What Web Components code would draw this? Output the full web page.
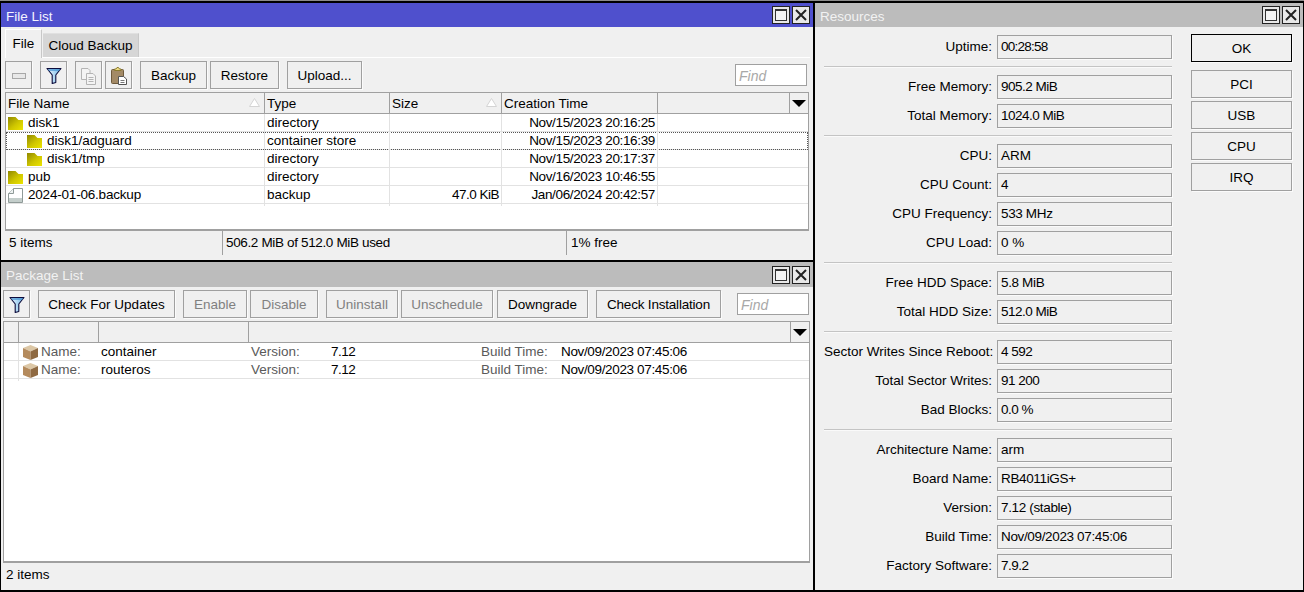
<!DOCTYPE html>
<html><head><meta charset="utf-8"><title>RouterOS</title>
<style>
html,body{margin:0;padding:0;height:100%;background:#000;overflow:hidden}
body{font:13.5px/18px "Liberation Sans",Arial,sans-serif;color:#000}
.n{letter-spacing:-.5px}
.d{letter-spacing:-.35px}
.f{letter-spacing:-.2px}
</style></head><body>
<mt-desktop>
  <mt-stack>
    <mt-window heading="File List" active style="--title-h:24px;--pad-l:4px;--pad-r:4px;--pad-b:5px;height:257px">
      <mt-tabs><mt-tab selected style="width:37px">File</mt-tab><mt-tab style="width:96px">Cloud Backup</mt-tab></mt-tabs>
      <mt-toolbar style="height:28px;margin-top:3px">
        <mt-button style="width:27px"><mt-icon name="minus"></mt-icon></mt-button>
        <mt-button style="width:27px;margin-left:8px"><mt-icon name="filter"></mt-icon></mt-button>
        <mt-button style="width:27px;margin-left:8px"><mt-icon name="copy"></mt-icon></mt-button>
        <mt-button style="width:27px;margin-left:3px"><mt-icon name="paste"></mt-icon></mt-button>
        <mt-button style="width:67px;margin-left:8px">Backup</mt-button>
        <mt-button style="width:69px;margin-left:3px">Restore</mt-button>
        <mt-button style="width:75px;margin-left:8px">Upload...</mt-button>
        <mt-find style="margin-left:auto;margin-right:2px"></mt-find>
      </mt-toolbar>
      <mt-table style="--cols:259px 125px 112px 156px 132px 18px;margin-top:3px">
        <mt-row header>
          <mt-cell sep sort>File Name</mt-cell><mt-cell sep>Type</mt-cell><mt-cell sep sort>Size</mt-cell><mt-cell sep>Creation Time</mt-cell><mt-cell sep></mt-cell><mt-cell menu></mt-cell>
        </mt-row>
        <mt-row><mt-cell sep><mt-icon name="folder"></mt-icon><span style="margin-left:5px">disk1</span></mt-cell><mt-cell sep>directory</mt-cell><mt-cell sep></mt-cell><mt-cell sep right><span class="d">Nov/15/2023 20:16:25</span></mt-cell><mt-cell></mt-cell><mt-cell></mt-cell></mt-row>
        <mt-row focused><mt-cell sep style="padding-left:21px"><mt-icon name="folder"></mt-icon><span style="margin-left:5px">disk1/adguard</span></mt-cell><mt-cell sep>container store</mt-cell><mt-cell sep></mt-cell><mt-cell sep right><span class="d">Nov/15/2023 20:16:39</span></mt-cell><mt-cell></mt-cell><mt-cell></mt-cell></mt-row>
        <mt-row><mt-cell sep style="padding-left:21px"><mt-icon name="folder"></mt-icon><span style="margin-left:5px">disk1/tmp</span></mt-cell><mt-cell sep>directory</mt-cell><mt-cell sep></mt-cell><mt-cell sep right><span class="d">Nov/15/2023 20:17:37</span></mt-cell><mt-cell></mt-cell><mt-cell></mt-cell></mt-row>
        <mt-row><mt-cell sep><mt-icon name="folder"></mt-icon><span style="margin-left:5px">pub</span></mt-cell><mt-cell sep>directory</mt-cell><mt-cell sep></mt-cell><mt-cell sep right><span class="d">Nov/16/2023 10:46:55</span></mt-cell><mt-cell></mt-cell><mt-cell></mt-cell></mt-row>
        <mt-row><mt-cell sep><mt-icon name="file"></mt-icon><span class="f" style="margin-left:5px">2024-01-06.backup</span></mt-cell><mt-cell sep>backup</mt-cell><mt-cell sep right><span class="n">47.0 KiB</span></mt-cell><mt-cell sep right><span class="d">Jan/06/2024 20:42:57</span></mt-cell><mt-cell></mt-cell><mt-cell></mt-cell></mt-row>
      </mt-table>
      <mt-status style="--status-cols:218px 344px 1fr"><span>5 items</span><span class="d" style="padding-left:3px">506.2 MiB of 512.0 MiB used</span><span>1% free</span></mt-status>
    </mt-window>
    <mt-window heading="Package List" style="--title-h:25px;--pad-l:2px;--pad-r:3px;--pad-b:3px;flex:1">
      <mt-toolbar style="height:28px;margin-top:3px">
        <mt-button style="width:27px"><mt-icon name="filter"></mt-icon></mt-button>
        <mt-button style="width:137px;margin-left:8px">Check For Updates</mt-button>
        <mt-button disabled style="width:64px;margin-left:8px">Enable</mt-button>
        <mt-button disabled style="width:68px;margin-left:3px">Disable</mt-button>
        <mt-button disabled style="width:72px;margin-left:8px">Uninstall</mt-button>
        <mt-button disabled style="width:92px;margin-left:3px">Unschedule</mt-button>
        <mt-button style="width:91px;margin-left:4px">Downgrade</mt-button>
        <mt-button class="f" style="width:125px;margin-left:8px">Check Installation</mt-button>
        <mt-find style="margin-left:auto;margin-right:1px"></mt-find>
      </mt-toolbar>
      <mt-table style="flex:1;--cols:15px 80px 150px 542px 18px;margin-top:3px">
        <mt-row header><mt-cell sep></mt-cell><mt-cell sep></mt-cell><mt-cell sep></mt-cell><mt-cell sep></mt-cell><mt-cell menu></mt-cell></mt-row>
        <mt-row style="--cols:15px 80px 150px 80px 150px 80px 1fr"><mt-cell sepl></mt-cell><mt-cell dim style="padding-left:4px"><mt-icon name="box"></mt-icon><span style="margin-left:3px">Name:</span></mt-cell><mt-cell>container</mt-cell><mt-cell dim>Version:</mt-cell><mt-cell><span class="n">7.12</span></mt-cell><mt-cell dim>Build Time:</mt-cell><mt-cell><span class="d">Nov/09/2023 07:45:06</span></mt-cell></mt-row>
        <mt-row style="--cols:15px 80px 150px 80px 150px 80px 1fr"><mt-cell sepl></mt-cell><mt-cell dim style="padding-left:4px"><mt-icon name="box"></mt-icon><span style="margin-left:3px">Name:</span></mt-cell><mt-cell>routeros</mt-cell><mt-cell dim>Version:</mt-cell><mt-cell><span class="n">7.12</span></mt-cell><mt-cell dim>Build Time:</mt-cell><mt-cell><span class="d">Nov/09/2023 07:45:06</span></mt-cell></mt-row>
      </mt-table>
      <mt-status style="--status-cols:1fr;--status-pl:3px"><span>2 items</span></mt-status>
    </mt-window>
  </mt-stack>
  <mt-window heading="Resources" style="--title-h:24px;height:587px">
    <mt-dialog>
      <mt-form>
        <mt-field label="Uptime:"><span style="letter-spacing:-.75px">00:28:58</span></mt-field>
        <mt-sep></mt-sep>
        <mt-field label="Free Memory:"><span class="n">905.2 MiB</span></mt-field>
        <mt-field label="Total Memory:"><span class="n">1024.0 MiB</span></mt-field>
        <mt-sep></mt-sep>
        <mt-field label="CPU:">ARM</mt-field>
        <mt-field label="CPU Count:">4</mt-field>
        <mt-field label="CPU Frequency:"><span class="d">533 MHz</span></mt-field>
        <mt-field label="CPU Load:">0 %</mt-field>
        <mt-sep></mt-sep>
        <mt-field label="Free HDD Space:"><span class="d">5.8 MiB</span></mt-field>
        <mt-field label="Total HDD Size:"><span class="n">512.0 MiB</span></mt-field>
        <mt-sep></mt-sep>
        <mt-field label="Sector Writes Since Reboot:"><span class="n">4 592</span></mt-field>
        <mt-field label="Total Sector Writes:"><span class="n">91 200</span></mt-field>
        <mt-field label="Bad Blocks:"><span class="n">0.0 %</span></mt-field>
        <mt-sep></mt-sep>
        <mt-field label="Architecture Name:">arm</mt-field>
        <mt-field label="Board Name:"><span class="d">RB4011iGS+</span></mt-field>
        <mt-field label="Version:"><span class="d">7.12 (stable)</span></mt-field>
        <mt-field label="Build Time:"><span class="d">Nov/09/2023 07:45:06</span></mt-field>
        <mt-field label="Factory Software:"><span class="n">7.9.2</span></mt-field>
      </mt-form>
      <mt-actions>
        <mt-button primary style="height:28px;margin-bottom:8px">OK</mt-button>
        <mt-button style="height:28px;margin-bottom:3px">PCI</mt-button>
        <mt-button style="height:28px;margin-bottom:3px">USB</mt-button>
        <mt-button style="height:28px;margin-bottom:3px">CPU</mt-button>
        <mt-button style="height:28px">IRQ</mt-button>
      </mt-actions>
    </mt-dialog>
  </mt-window>
</mt-desktop>
<script>
function def(name,css,html){
  customElements.define(name,class extends HTMLElement{
    constructor(){super();this.attachShadow({mode:'open'});this._h=html;this._c=css;}
    connectedCallback(){ if(this._done) return; this._done=1; const h=this._h; this.shadowRoot.innerHTML='<style>'+this._c+'</style>'+(typeof h==='function'?h(this):h); }
  });
}
def('mt-desktop',`:host{display:grid;grid-template-columns:812px 488px;column-gap:2px;padding:2px 1px 2px 1px;border-top:1px solid #8c8c8c;box-sizing:border-box;height:592px;background:#000;align-items:start}`,'<slot></slot>');
def('mt-stack',`:host{display:flex;flex-direction:column;gap:2px;height:587px}`,'<slot></slot>');
def('mt-window',`:host{display:flex;flex-direction:column;background:#f0f0f0;min-height:0;--title:#bcbcbc;--title-fg:#f2f2f2}
:host([active]){--title:#4f50cd;--title-fg:#f4f4ff}
.t{flex:none;height:var(--title-h,24px);background:var(--title);color:var(--title-fg);display:flex;align-items:center;padding:0 3px 0 5px}
.t span{flex:1;padding-top:3px}
.b{width:18px;height:18px;box-sizing:border-box;border:1px solid #222;background:#e8e8e8;margin-left:2px;display:flex;align-items:center;justify-content:center}
.b i{display:block;width:12px;height:12px;box-sizing:border-box;border:1px solid #333;border-top-width:2px;background:#f4f4f4}
.c{flex:1;display:flex;flex-direction:column;min-height:0;padding:0 var(--pad-r,0) var(--pad-b,0) var(--pad-l,0)}`,
 h=>`<div class="t"><span>${h.getAttribute('heading')}</span><div class="b"><i></i></div><div class="b"><svg width="14" height="14" viewBox="0 0 14 14"><path d="M2 2 12 12M12 2 2 12" stroke="#222" stroke-width="2" fill="none"/></svg></div></div><div class="c"><slot></slot></div>`);
def('mt-tabs',`:host{display:flex;align-items:flex-end;height:30px;border-bottom:1px solid #fff;margin-right:-1px}`,'<slot></slot>');
def('mt-tab',`:host{display:block;box-sizing:border-box;height:24px;background:#d6d6d6;text-align:center;line-height:23px;margin-left:1px;border-right:1px solid #c8c8c8;border-top:1px solid #e0e0e0}
:host([selected]){height:29px;background:#f0f0f0;margin-left:0;border:0;border-left:1px solid #fff;border-top:1px solid #fff;line-height:28px;margin-bottom:-1px;border-right:1px solid #c8c8c8}`,'<slot></slot>');
def('mt-toolbar',`:host{display:flex;align-items:center;flex:none}`,'<slot></slot>');
def('mt-button',`:host{display:flex;align-items:center;justify-content:center;box-sizing:border-box;height:28px;flex:none;border:1px solid #a0a0a0;box-shadow:1px 1px 0 #fbfbfb;background:#f0f0f0;padding-top:2px}
:host([disabled]){color:#808080}
:host([primary]){border-color:#000}`,'<slot></slot>');
def('mt-find',`:host{display:block;box-sizing:border-box;width:72px;height:22px;border:1px solid #a0a0a0;background:#fff;color:#a8a8a8;font-style:italic;font-size:14px;line-height:22px;padding-left:3px}`,'Find');
def('mt-table',`:host{display:block;flex:1;min-height:0;background:#fff;border:1px solid #a0a0a0;border-bottom-width:2px;box-sizing:border-box}`,'<slot></slot>');
def('mt-row',`:host{display:grid;grid-template-columns:var(--cols);height:18px;box-sizing:border-box;border-bottom:1px solid #e2e2e2;background:#fff;position:relative;--cpb:2px;--cpt:0px}
:host([header]){height:21px;background:#f0f0f0;border-bottom:1px solid #a0a0a0;--sep:#a0a0a0;--cpb:0px;--cpt:2px}
:host([focused]){outline:1px dotted #555;outline-offset:-1px}`,'<slot></slot>');
def('mt-cell',`:host{display:flex;align-items:center;box-sizing:border-box;padding:var(--cpt,0) 2px var(--cpb,0) 2px;min-width:0;white-space:nowrap;position:relative;height:100%}
:host([sep]){border-right:1px solid var(--sep,#e2e2e2)}
:host([sepl]){border-right:1px solid #e2e2e2}
:host([right]){justify-content:flex-end}
:host([dim]){color:#5a5a5a}
.s{display:none;position:absolute;right:4px;top:5px}
:host([sort]) .s{display:block}
.m{display:none;position:absolute;left:2px;top:7px}
:host([menu]) .m{display:block}`,
 `<slot></slot><svg class="s" width="11" height="9" viewBox="0 0 11 9"><path d="M5.500 .5 10.500 8.500H.5Z" fill="#fff" stroke="#d4d4d4"/></svg><svg class="m" width="14" height="7" viewBox="0 0 14 7"><path d="M0 0H14L7 7Z" fill="#000"/></svg>`);
def('mt-status',`:host{display:grid;grid-template-columns:var(--status-cols);height:24px;flex:none;line-height:23px;margin-right:-1px;position:relative}
::slotted(span){padding-left:var(--status-pl,4px);border-right:1px solid #a0a0a0;box-sizing:border-box;white-space:nowrap}
::slotted(span:last-child){border-right:0}`,'<slot></slot>');
def('mt-dialog',`:host{display:flex;padding:8px 11px 0 9px}`,'<slot></slot>');
def('mt-form',`:host{display:flex;flex-direction:column;width:348px}`,'<slot></slot>');
def('mt-actions',`:host{display:flex;flex-direction:column;width:101px;margin-left:19px;margin-top:-1px}`,'<slot></slot>');
def('mt-field',`:host{display:grid;grid-template-columns:168px 175px;column-gap:5px;height:22px;margin-bottom:7px;line-height:24px}
.l{text-align:right;white-space:nowrap}
.v{box-sizing:border-box;border:1px solid #a0a0a0;padding-left:3px;line-height:22px;box-shadow:1px 1px 0 #fbfbfb}`,
 h=>`<div class="l">${h.getAttribute('label')}</div><div class="v"><slot></slot></div>`);
def('mt-sep',`:host{display:block;height:1px;background:#c4c4c4;box-shadow:0 1px 0 #fafafa;margin:2px 0 8px}`,'');
const ICONS={
 minus:`<svg width="14" height="6" viewBox="0 0 14 6"><rect x=".5" y=".5" width="13" height="5" fill="#e8e8e8" stroke="#a8a8a8"/></svg>`,
 filter:`<svg width="16" height="18" viewBox="0 0 16 18"><defs><linearGradient id="g" x1="0" x2="1"><stop offset="0" stop-color="#f2f9ff"/><stop offset="1" stop-color="#6fb6e6"/></linearGradient></defs><path d="M1 1.500H15L9.800 8V15.500L6.200 16.500V8Z" fill="url(#g)" stroke="#0c0c3c" stroke-width="1.100" stroke-linejoin="round"/><path d="M2.500 3H13.500" stroke="#3f8fd0" stroke-width="1.300"/></svg>`,
 copy:`<svg width="15" height="17" viewBox="0 0 15 17" fill="#f4f4f4" stroke="#b4b4b4"><path d="M.5.500H7L9 2.500V11.500H.5Z"/><path d="M5.500 5.500H12L14.500 8V16.500H5.500Z"/><path d="M7.500 9.500H12.500M7.500 11.500H12.500M7.500 13.500H12.500" fill="none"/></svg>`,
 paste:`<svg width="16" height="18" viewBox="0 0 16 18"><rect x=".5" y="2.500" width="12" height="14" rx="1" fill="#a38a66" stroke="#6e5a3c"/><path d="M3.500 3.500V2H5L6 .5H7.500L8.500 2H10V3.500Z" fill="#eedc80" stroke="#8a7a30"/><path d="M7.500 9.500H12.500L15.500 12V17.500H7.500Z" fill="#fff" stroke="#555"/><path d="M9.500 13.500H13.500M9.500 15.500H13.500" stroke="#777"/></svg>`,
 folder:`<svg width="15" height="13" viewBox="0 0 15 13" style="flex:none"><defs><linearGradient id="f" x1="0" y1="0" x2="1" y2="1"><stop offset="0" stop-color="#908800"/><stop offset=".55" stop-color="#cfc600"/><stop offset="1" stop-color="#ece400"/></linearGradient></defs><path d="M0 0H7.500L10.500 3H15V13H0Z" fill="url(#f)"/></svg>`,
 file:`<svg width="15" height="15" viewBox="0 0 15 15" style="flex:none" fill="#fff" stroke="#8f9a98"><path d="M5.500.5H14.500V14.500H.5V5.500Z"/><path d="M.5 5.500H5.500V.5" fill="#eef2f1"/><rect x="1" y="10" width="13" height="4" fill="#c4cecb" stroke="none"/></svg>`,
 box:`<svg width="15" height="15" viewBox="0 0 15 15" style="flex:none"><path d="M7.500 0 15 3 7.500 6.500 0 3Z" fill="#dcc7a6"/><path d="M0 3 7.500 6.500V15L0 12Z" fill="#b48a5c"/><path d="M15 3 7.500 6.500V15L15 12Z" fill="#8f6a42"/></svg>`
};
def('mt-icon',`:host{display:inline-flex;flex:none;align-items:center;justify-content:center}`,h=>ICONS[h.getAttribute('name')]||'');
</script>
</body></html>
